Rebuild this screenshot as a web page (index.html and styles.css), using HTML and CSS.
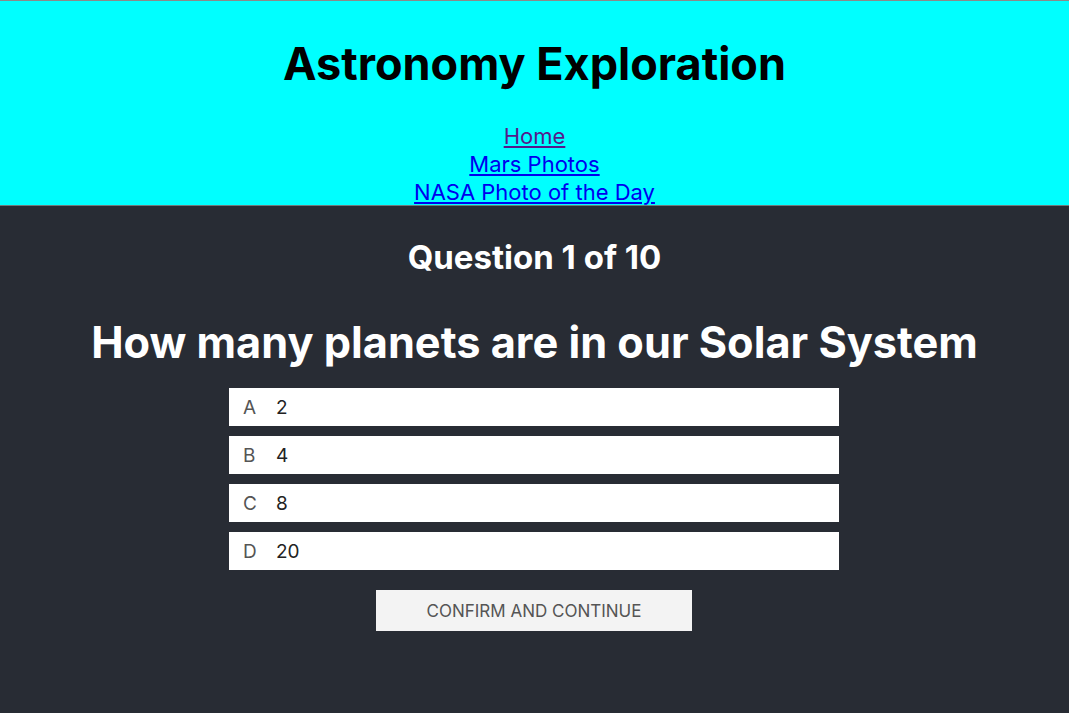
FILE: index.html
```html
<!DOCTYPE html>
<html lang="en">
<head>
<meta charset="utf-8">
<title>Astronomy Exploration</title>
<link rel="stylesheet" href="styles.css">
</head>
<body>
<header class="site-header">
  <h1 class="site-title">Astronomy Exploration</h1>
  <nav class="site-nav">
    <a href="#" class="nav-link visited">Home</a>
    <a href="#mars" class="nav-link">Mars Photos</a>
    <a href="#apod" class="nav-link">NASA Photo of the Day</a>
  </nav>
</header>
<main class="quiz">
  <h3 class="quiz-count">Question 1 of 10</h3>
  <h2 class="quiz-question">How many planets are in our Solar System</h2>
  <ul class="options">
    <li class="option"><span class="opt-letter">A</span><span class="opt-value">2</span></li>
    <li class="option"><span class="opt-letter">B</span><span class="opt-value">4</span></li>
    <li class="option"><span class="opt-letter">C</span><span class="opt-value">8</span></li>
    <li class="option"><span class="opt-letter">D</span><span class="opt-value">20</span></li>
  </ul>
  <button class="confirm">CONFIRM AND CONTINUE</button>
</main>
</body>
</html>
```
FILE: styles.css
```css
html, body {
  margin: 0;
  padding: 0;
  background: #282c34;
  font-family: Inter, "Noto Sans", sans-serif;
  min-height: 100%;
}
.site-header {
  background: #00ffff;
  border-top: 1px solid #8a8a8a;
  border-bottom: 1px solid #6c7a7a;
  text-align: center;
  padding-top: 36px;
  height: 168px;
}
.site-title {
  margin: 0;
  font-size: 45px;
  line-height: 53px;
  font-weight: 700;
  color: #000;
}
.site-nav {
  display: flex;
  flex-direction: column;
  align-items: center;
  margin-top: 32px;
}
.nav-link {
  font-size: 22px;
  line-height: 28px;
  color: #0000ee;
}
.nav-link.visited {
  color: #551a8b;
}
.quiz {
  display: flex;
  flex-direction: column;
  align-items: center;
  color: #fff;
}
.quiz-count {
  margin: 31px 0 0;
  font-size: 33px;
  line-height: 40px;
  font-weight: 700;
}
.quiz-question {
  margin: 39px 0 0;
  font-size: 43.3px;
  line-height: 53px;
  font-weight: 700;
}
.options {
  list-style: none;
  margin: 19px 1px 0 0;
  padding: 0;
  width: 610px;
  display: flex;
  flex-direction: column;
  gap: 10px;
}
.option {
  background: #fff;
  height: 38px;
  display: flex;
  align-items: center;
  padding-left: 14px;
  font-size: 19px;
}
.opt-letter {
  color: #555;
  width: 33px;
}
.opt-value {
  color: #222;
}
.confirm {
  margin: 20px 1px 0 0;
  width: 316px;
  height: 41px;
  border: none;
  background: #f3f3f3;
  color: #555;
  font-family: Inter, "Noto Sans", sans-serif;
  font-size: 17px;
  padding: 0;
}
```
